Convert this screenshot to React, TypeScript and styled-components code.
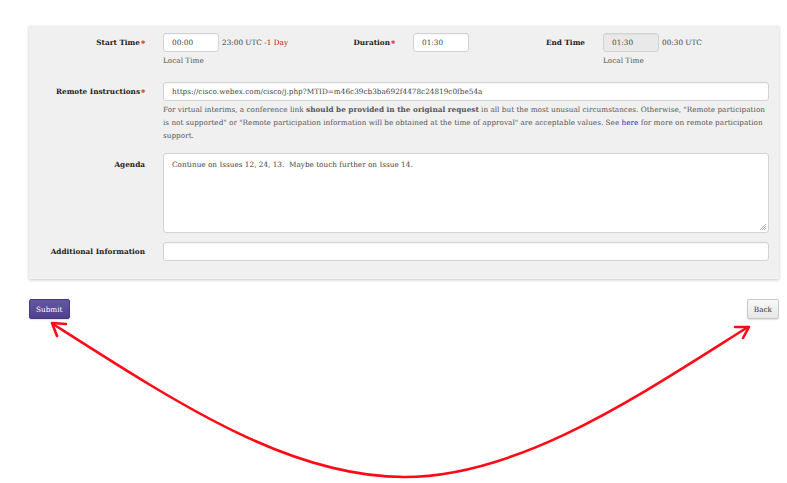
import React from 'react'
import styled, { createGlobalStyle } from 'styled-components'

const GlobalStyle = createGlobalStyle`
  html, body {
    margin: 0;
    padding: 0;
    background: #fff;
  }
  body {
    font-family: "DejaVu Serif", "Liberation Serif", serif;
    font-size: 7.3px;
    color: #333;
  }
`

const PageWrapper = styled.div`
  position: relative;
  width: 787px;
  height: 483px;
  overflow: hidden;
  padding: 26px 8px 0 29px;
  box-sizing: border-box;
`

const Panel = styled.div`
  width: 750px;
  background: #f0f0f0;
  box-shadow: 0 1px 3px rgba(0, 0, 0, 0.22);
  padding: 7px 10px 18px 0;
  box-sizing: border-box;
`

const TimeRow = styled.div`
  display: grid;
  grid-template-columns: 116px 150px 64px 92px 62px 1fr;
  column-gap: 18px;
  margin-bottom: 15px;
`

const FormRow = styled.div<{ $mb?: number }>`
  display: grid;
  grid-template-columns: 116px 1fr;
  column-gap: 18px;
  margin-bottom: ${(p) => (p.$mb ?? 9)}px;
`

const Label = styled.label<{ $top?: boolean }>`
  font-weight: bold;
  color: #222;
  text-align: right;
  line-height: 13px;
  padding-top: ${(p) => (p.$top ? 5 : 3)}px;
  white-space: nowrap;
`

const Required = styled.span`
  color: #d9534f;
  font-size: 5px;
  margin-left: 1px;
  vertical-align: 1px;
`

const Field = styled.div`
  display: flex;
  flex-direction: column;
  min-width: 0;
`

const InlineGroup = styled.div`
  display: flex;
  align-items: center;
  gap: 3px;
`

const TextInput = styled.div<{ $width?: number; $disabled?: boolean }>`
  box-sizing: border-box;
  width: ${(p) => (p.$width ? `${p.$width}px` : '100%')};
  height: 19px;
  line-height: 12px;
  padding: 3px 8px;
  background: ${(p) => (p.$disabled ? '#e9e9e9' : '#fff')};
  border: 1px solid #d3d3d3;
  border-radius: 3px;
  box-shadow: inset 0 1px 1px rgba(0, 0, 0, 0.04);
  color: #444;
  white-space: nowrap;
  overflow: hidden;
`

const TextArea = styled.div`
  position: relative;
  box-sizing: border-box;
  width: 100%;
  height: 80px;
  padding: 5px 8px;
  line-height: 12px;
  background: #fff;
  border: 1px solid #d3d3d3;
  border-radius: 3px;
  color: #444;
`

const ResizeGrip = styled.svg`
  position: absolute;
  right: 1px;
  bottom: 1px;
`

const UtcText = styled.span`
  color: #444;
  white-space: nowrap;
`

const DayShift = styled.span`
  color: #d0021b;
`

const HelpBlock = styled.div`
  color: #555;
  line-height: 13px;
  margin-top: 2px;
`

const HelpLink = styled.a`
  color: #2323c8;
  font-weight: normal;
  text-decoration: none;
`

const Actions = styled.div`
  display: flex;
  justify-content: space-between;
  width: 750px;
  margin-top: 20px;
`

const Button = styled.button<{ $primary?: boolean }>`
  font-family: "DejaVu Serif", "Liberation Serif", serif;
  font-size: 7.3px;
  height: 20px;
  padding: 0 6px;
  border-radius: 2px;
  cursor: pointer;
  border: 1px solid ${(p) => (p.$primary ? '#463a7c' : '#c8c8c8')};
  color: ${(p) => (p.$primary ? '#fff' : '#333')};
  background: ${(p) =>
    p.$primary
      ? 'linear-gradient(#6556a3, #4f4190)'
      : 'linear-gradient(#fafafa, #e6e6e6)'};
  box-shadow: 0 1px 1px rgba(0, 0, 0, 0.12);
`

const Annotation = styled.svg`
  position: absolute;
  left: 0;
  top: 0;
  pointer-events: none;
`

const App: React.FC = () => {
  return (
    <PageWrapper>
      <GlobalStyle />
      <Panel>
        <TimeRow>
          <Label>
            Start Time<Required>✱</Required>
          </Label>
          <Field>
            <InlineGroup>
              <TextInput $width={56}>00:00</TextInput>
              <UtcText>
                23:00 UTC <DayShift>-1 Day</DayShift>
              </UtcText>
            </InlineGroup>
            <HelpBlock>Local Time</HelpBlock>
          </Field>
          <Label>
            Duration<Required>✱</Required>
          </Label>
          <Field>
            <TextInput $width={56}>01:30</TextInput>
          </Field>
          <Label>End Time</Label>
          <Field>
            <InlineGroup>
              <TextInput $width={56} $disabled>
                01:30
              </TextInput>
              <UtcText>00:30 UTC</UtcText>
            </InlineGroup>
            <HelpBlock>Local Time</HelpBlock>
          </Field>
        </TimeRow>

        <FormRow $mb={11}>
          <Label>
            Remote Instructions<Required>✱</Required>
          </Label>
          <Field>
            <TextInput>https://cisco.webex.com/cisco/j.php?MTID=m46c39cb3ba692f4478c24819c0fbe54a</TextInput>
            <HelpBlock>
              For virtual interims, a conference link <b>should be provided in the original request</b> in
              all but the most unusual circumstances. Otherwise, "Remote participation is not supported" or
              "Remote participation information will be obtained at the time of approval" are acceptable
              values. See <HelpLink href="#">here</HelpLink> for more on remote participation support.
            </HelpBlock>
          </Field>
        </FormRow>

        <FormRow>
          <Label $top>Agenda</Label>
          <TextArea>
            Continue on Issues 12, 24, 13.&nbsp; Maybe touch further on Issue 14.
            <ResizeGrip width="8" height="8" viewBox="0 0 8 8">
              <path d="M7 1 L1 7 M7 3 L3 7 M7 5 L5 7" stroke="#999" strokeWidth="0.8" />
            </ResizeGrip>
          </TextArea>
        </FormRow>

        <FormRow $mb={0}>
          <Label>Additional Information</Label>
          <TextInput />
        </FormRow>
      </Panel>

      <Actions>
        <Button $primary>Submit</Button>
        <Button>Back</Button>
      </Actions>

      <Annotation width="787" height="483" viewBox="0 0 787 483">
        <g fill="none" stroke="#ff0a17" strokeWidth="2.6" strokeLinecap="round" strokeLinejoin="round">
          <path d="M53 324 C 180 405 290 477 404 477 C 520 477 640 395 748 327" />
          <path d="M66 324 L52 323 L57 336" />
          <path d="M735 327 L749 327 L743 338" />
        </g>
      </Annotation>
    </PageWrapper>
  )
}

export default App
